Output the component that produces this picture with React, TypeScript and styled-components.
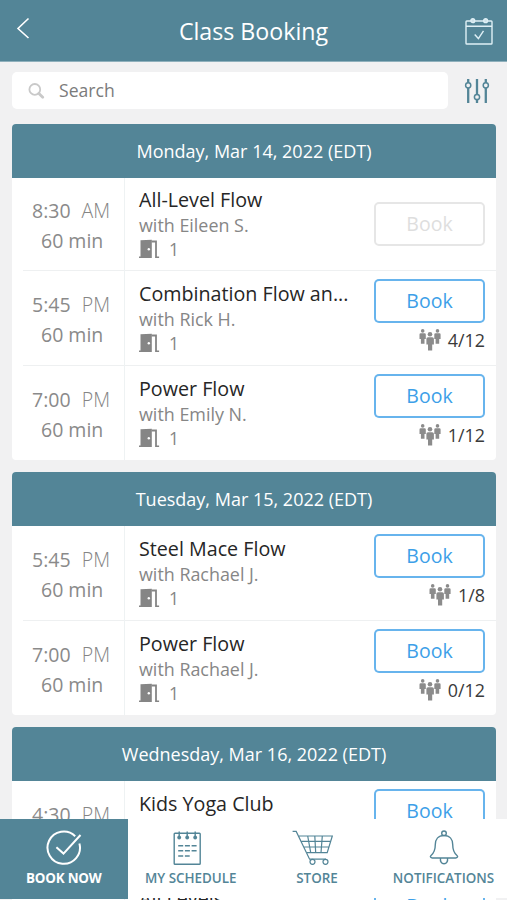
import React from 'react';
import styled, { createGlobalStyle } from 'styled-components';

const teal = '#538597';
const blue = '#3d9fe8';

const Global = createGlobalStyle`
  * { box-sizing: border-box; }
  html, body { margin: 0; padding: 0; overflow: hidden; }
  body { background: #f1f1f2; font-family: "Open Sans", "Noto Sans", sans-serif; color: #333; }
  button { font-family: inherit; }
`;

const Screen = styled.div`
  position: relative;
  width: 507px;
  height: 900px;
  overflow: hidden;
  display: grid;
  grid-template-rows: 62px 62px 776px;
  background: #f1f1f2;
`;

const Header = styled.header`
  display: grid;
  grid-template-columns: 60px 1fr 60px;
  align-items: center;
  background: ${teal};
  border-bottom: 1px solid #8fb0bc;
  color: #fff;
`;

const Title = styled.h1`
  margin: 1px 0 0;
  text-align: center;
  font-size: 23.2px;
  font-weight: 400;
  line-height: 32px;
  white-space: nowrap;
`;

const IconButton = styled.button<{ $pad?: string }>`
  display: flex;
  border: 0;
  padding: ${(p) => p.$pad ?? '0'};
  background: none;
`;

const SearchBar = styled.div`
  display: flex;
  padding: 10px 17px 15px 12px;
  justify-content: space-between;
`;

const SearchField = styled.label`
  display: flex;
  align-items: center;
  width: 436px;
  height: 37px;
  padding-left: 16px;
  gap: 14px;
  border-radius: 5px;
  background: #fff;
`;

const SearchInput = styled.input`
  border: 0;
  outline: 0;
  padding: 0 0 1px;
  width: 300px;
  font: 400 17.6px "Open Sans", sans-serif;
  background: none;
  &::placeholder { color: #7b7b7b; opacity: 1; }
`;

const Listing = styled.main`
  display: flex;
  flex-direction: column;
  gap: 12px;
  padding: 0 11px 0 12px;
  overflow: hidden;
`;

const DayCard = styled.section`
  flex: none;
  border-radius: 4px;
  overflow: hidden;
  background: #fff;
`;

const DayTitle = styled.h2`
  margin: 0;
  height: 54px;
  line-height: 54px;
  text-align: center;
  font-size: 18px;
  font-weight: 400;
  color: #fff;
  background: ${teal};
`;

const Row = styled.div<{ $height: number }>`
  display: grid;
  grid-template-columns: 113px 1fr 122px;
  height: ${(p) => p.$height}px;
  background: linear-gradient(#eef0f1, #eef0f1) 11px 100% / 100% 1px no-repeat;
  &:last-child { background: none; }
`;

const TimeCell = styled.div<{ $raised: boolean }>`
  display: flex;
  flex-direction: column;
  padding-top: ${(p) => (p.$raised ? 18 : 19)}px;
  border-right: 1px solid #eef2f3;
  color: #8a8a8a;
  font-size: 19.5px;
  line-height: 29.5px;
`;

const Time = styled.div`
  display: flex;
  justify-content: space-between;
  padding: 0 14px 0 20px;
`;

const Meridiem = styled.span`
  font-weight: 300;
  color: #858585;
`;

const Duration = styled.div`
  padding-left: 29px;
`;

const Details = styled.div<{ $raised: boolean }>`
  padding: ${(p) => (p.$raised ? 9 : 10)}px 0 0 14px;
  min-width: 0;
  white-space: nowrap;
`;

const ClassName = styled.div`
  font-size: 19.7px;
  line-height: 26px;
  color: #262626;
`;

const Teacher = styled.div`
  font-size: 17.9px;
  line-height: 24px;
  color: #868686;
`;

const Room = styled.div`
  display: flex;
  align-items: center;
  gap: 9px;
  height: 24px;
  font-size: 17.5px;
  color: #868686;
`;

const Actions = styled.div<{ $centered: boolean }>`
  display: flex;
  flex-direction: column;
  align-items: flex-end;
  padding: ${(p) => (p.$centered ? 24 : 8)}px 11px 0 0;
`;

const BookButton = styled.button`
  width: 111px;
  height: 44px;
  padding: 0;
  border: 2px solid ${blue}c8;
  border-radius: 5px;
  background: #fff;
  color: ${blue};
  font-size: 19.5px;
  line-height: 38px;
  &:disabled { border-color: #e6e6e6; color: #dedede; }
`;

const Capacity = styled.div`
  display: flex;
  align-items: center;
  gap: 7px;
  height: 33px;
  font-size: 17.9px;
  color: #3a3a3a;
`;

const TabBar = styled.nav`
  position: absolute;
  left: 0;
  bottom: 2px;
  width: 507px;
  height: 79px;
  display: grid;
  grid-template-columns: 127.5px 126.5px 126px 127px;
  background: #fff;
`;

const Tab = styled.a<{ $active?: boolean }>`
  display: flex;
  flex-direction: column;
  align-items: center;
  height: ${(p) => (p.$active ? 80 : 79)}px;
  padding-top: 9px;
  white-space: nowrap;
  font-size: 13.4px;
  font-weight: ${(p) => (p.$active ? 700 : 600)};
  letter-spacing: ${(p) => (p.$active ? '-0.2px' : '0')};
  line-height: 18px;
  color: ${(p) => (p.$active ? '#fff' : teal)};
  background: ${(p) => (p.$active ? teal : 'transparent')};
  svg { flex: none; margin-bottom: 1px; }
`;

const BackIcon = () => (
  <svg width="14" height="24" viewBox="0 0 14 24" fill="none" stroke="#fff" strokeWidth="1.6">
    <path d="M12.5 2.5 2 12.500l10.500 9.500" />
  </svg>
);

const CalendarIcon = () => (
  <svg width="30" height="30" viewBox="0 0 30 30" fill="none" stroke="#dff0f6" strokeWidth="1.4">
    <rect x="2" y="5" width="26" height="23" rx=".8" />
    <path d="M2 10.300h26M10.700 18.600l3.700 4 5.100-7.800" />
    <circle cx="8.8" cy="4.7" r="1.9" fill="#cfe2e9" />
    <circle cx="21.6" cy="4.7" r="1.9" fill="#cfe2e9" />
  </svg>
);

const SearchIcon = () => (
  <svg width="17" height="17" viewBox="0 0 17 17" fill="none" stroke="#c9c9c9">
    <circle cx="6.8" cy="7.4" r="5.4" strokeWidth="1.8" />
    <path d="m10.900 11.500 3.800 3.800" strokeWidth="2.8" strokeLinecap="round" />
  </svg>
);

const FilterIcon = () => (
  <svg width="26" height="26" viewBox="0 0 26 26" fill="#f1f1f2" stroke={teal}>
    <path d="M4.200 1v24M13 1v24M21.800 1v24" strokeWidth="2.3" />
    <circle cx="4.2" cy="7.3" r="2.6" strokeWidth="1.5" />
    <circle cx="13" cy="19" r="2.6" strokeWidth="1.5" />
    <circle cx="21.8" cy="7.3" r="2.6" strokeWidth="1.5" />
  </svg>
);

const DoorIcon = () => (
  <svg width="21" height="20" viewBox="0 0 21 20" fill="#858585">
    <path d="M1.500 1.200 12.800.8V19H0v-1.500h1.500z" />
    <path d="M12.500 1.500h5.400v16h2.200V19h-4V3.500h-3.600z" />
    <circle cx="9.800" cy="10.200" r="1.2" fill="#fff" />
  </svg>
);

const PeopleIcon = () => (
  <svg width="22" height="22" viewBox="0 0 22 22" fill="#8b8b8b">
    <circle cx="3.7" cy="1.9" r="1.8" />
    <path d="M1.800 4.200h3.800q1.200 0 1.200 1.300v4.600H5.500v4.600H1.900v-4.600H.5V5.500q0-1.300 1.300-1.300z" />
    <circle cx="18.5" cy="1.9" r="1.8" />
    <path d="M16.600 4.200h3.800q1.200 0 1.200 1.300v4.600h-1.400v4.600h-3.600v-4.600h-1.300V5.500q0-1.300 1.300-1.300z" />
    <circle cx="11" cy="5.2" r="2.3" />
    <path d="M9 8.200h4.200q1.700 0 1.700 1.500v5.800h-1.700v6H9v-6H7.400V9.700Q7.400 8.200 9 8.200z" />
  </svg>
);

const BookNowIcon = () => (
  <svg width="38" height="40" viewBox="0 0 38 40" fill="none" stroke="#fff" strokeWidth="2">
    <path d="M30.200 8.200A16.200 16.200 0 1 0 34.400 15.500" />
    <path d="m11.400 19.300 7.100 6.300L35.500 7" />
  </svg>
);

const ScheduleIcon = () => (
  <svg width="38" height="40" viewBox="0 0 38 40" fill="none" stroke={teal} strokeWidth="1.4">
    <rect x="2.2" y="5.2" width="26" height="31" rx=".8" />
    <path d="M7.200 3.500v6M15.200 3.500v6M23.200 3.500v6" />
    <g fill={teal} stroke="none">
      <circle cx="7.2" cy="9.5" r="1.9" />
      <circle cx="15.2" cy="9.5" r="1.9" />
      <circle cx="23.2" cy="9.5" r="1.9" />
    </g>
    <path d="M6.200 17.700h18.500M6.200 22.800h18.500M6.200 28h11.500" strokeDasharray="5 1.7" strokeWidth="1.6" />
  </svg>
);

const CartIcon = () => (
  <svg width="51" height="40" viewBox="0 0 51 40" fill="none" stroke={teal} strokeWidth="1.2">
    <path d="M.6 3.400h3.600L17.600 31.200H34M7 8h33.300l-5.100 16.700H15M9.600 13.400h29M12.300 19h24.600M15.700 8l3 16.700M22.800 8l.9 16.700M30.300 8l-1.300 16.700" />
    <circle cx="20.5" cy="33.8" r="2.5" fill="#fff" />
    <circle cx="33.5" cy="33.8" r="2.5" fill="#fff" />
  </svg>
);

const BellIcon = () => (
  <svg width="30" height="40" viewBox="0 0 30 40" fill="none" stroke={teal} strokeWidth="1.4">
    <circle cx="15" cy="5.3" r="2.3" />
    <path d="M15 7.500c-6 0-8.700 4.100-8.700 9 0 6-1 8.500-4.500 11.200-1 1 0 2.300 1.500 2.300h23.400c1.500 0 2.500-1.300 1.500-2.300-3.500-2.700-4.500-5.200-4.500-11.200 0-4.900-2.700-9-8.700-9z" />
    <path d="M11.500 30c-.5 3.300.9 5.800 3.500 5.800s4-2.500 3.500-5.800" />
  </svg>
);

interface Session {
  time: string;
  meridiem: string;
  name: string;
  teacher: string;
  spots?: string;
  height: number;
}

const days: { title: string; sessions: Session[] }[] = [
  {
    title: 'Monday, Mar 14, 2022 (EDT)',
    sessions: [
      { time: '8:30', meridiem: 'AM', name: 'All-Level Flow', teacher: 'Eileen S.', height: 93 },
      { time: '5:45', meridiem: 'PM', name: 'Combination Flow an...', teacher: 'Rick H.', spots: '4/12', height: 95 },
      { time: '7:00', meridiem: 'PM', name: 'Power Flow', teacher: 'Emily N.', spots: '1/12', height: 94 },
    ],
  },
  {
    title: 'Tuesday, Mar 15, 2022 (EDT)',
    sessions: [
      { time: '5:45', meridiem: 'PM', name: 'Steel Mace Flow', teacher: 'Rachael J.', spots: '1/8', height: 95 },
      { time: '7:00', meridiem: 'PM', name: 'Power Flow', teacher: 'Rachael J.', spots: '0/12', height: 94 },
    ],
  },
  {
    title: 'Wednesday, Mar 16, 2022 (EDT)',
    sessions: [
      { time: '4:30', meridiem: 'PM', name: 'Kids Yoga Club', teacher: 'Rachael J.', spots: '0/12', height: 95 },
      { time: '5:45', meridiem: 'PM', name: 'All Levels', teacher: 'Rachael J.', spots: '0/12', height: 94 },
    ],
  },
];

const SessionRow = ({ session }: { session: Session }) => (
  <Row $height={session.height}>
    <TimeCell $raised={!session.spots}>
      <Time><span>{session.time}</span><Meridiem>{session.meridiem}</Meridiem></Time>
      <Duration>60 min</Duration>
    </TimeCell>
    <Details $raised={!session.spots}>
      <ClassName>{session.name}</ClassName>
      <Teacher>with {session.teacher}</Teacher>
      <Room><DoorIcon />1</Room>
    </Details>
    <Actions $centered={!session.spots}>
      <BookButton disabled={!session.spots}>Book</BookButton>
      {session.spots && <Capacity><PeopleIcon />{session.spots}</Capacity>}
    </Actions>
  </Row>
);

export default function App() {
  return (
    <Screen>
      <Global />
      <Header>
        <IconButton aria-label="Back" $pad="0 0 5px 16px"><BackIcon /></IconButton>
        <Title>Class Booking</Title>
        <IconButton aria-label="Calendar" $pad="0 0 0 17px"><CalendarIcon /></IconButton>
      </Header>
      <SearchBar>
        <SearchField><SearchIcon /><SearchInput placeholder="Search" /></SearchField>
        <IconButton aria-label="Filters" $pad="6px 0 0"><FilterIcon /></IconButton>
      </SearchBar>
      <Listing>
        {days.map((day) => (
          <DayCard key={day.title}>
            <DayTitle>{day.title}</DayTitle>
            {day.sessions.map((s) => <SessionRow key={s.time} session={s} />)}
          </DayCard>
        ))}
      </Listing>
      <TabBar>
        <Tab $active><BookNowIcon />BOOK NOW</Tab>
        <Tab><ScheduleIcon />MY SCHEDULE</Tab>
        <Tab><CartIcon />STORE</Tab>
        <Tab><BellIcon />NOTIFICATIONS</Tab>
      </TabBar>
    </Screen>
  );
}
